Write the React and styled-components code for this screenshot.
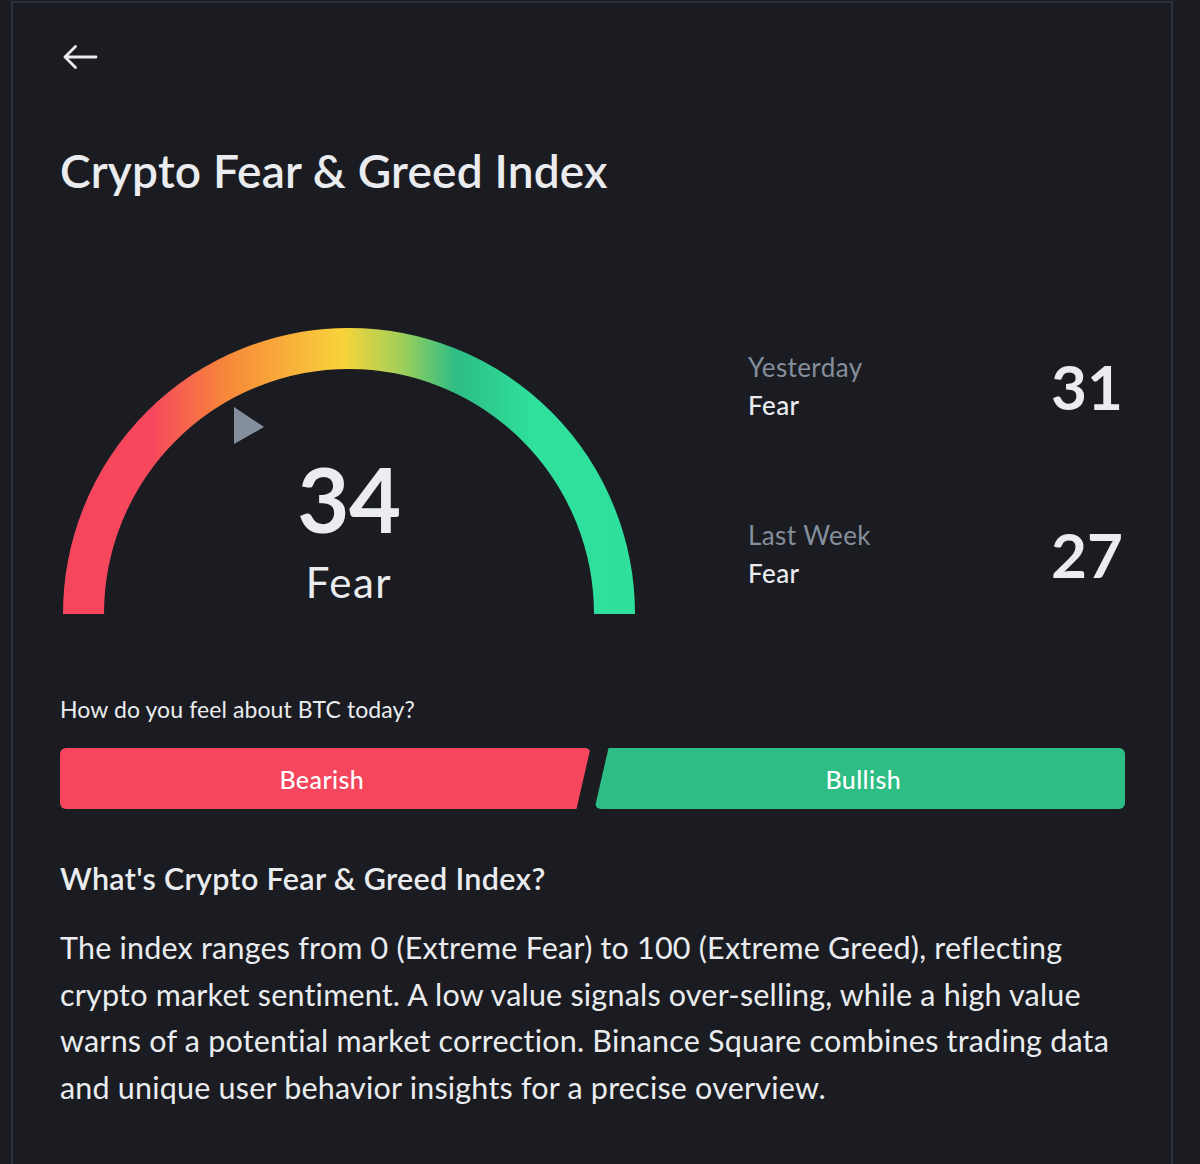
import React from "react";
import styled, { createGlobalStyle } from "styled-components";

const GlobalStyle = createGlobalStyle`
  html, body {
    margin: 0;
    padding: 0;
    background: #1b1c21;
  }
  body {
    font-family: Lato, "Open Sans", sans-serif;
    color: #eaecef;
  }
`;

const history = [
  { label: "Yesterday", mood: "Fear", value: 31 },
  { label: "Last Week", mood: "Fear", value: 27 },
];

function BackArrow() {
  return (
    <svg width="36" height="26" viewBox="0 0 36 26" fill="none">
      <path
        d="M34 13H3M13.5 2.5L3 13l10.5 10.5"
        stroke="#eaecef"
        strokeWidth="2.8"
        strokeLinecap="round"
        strokeLinejoin="round"
      />
    </svg>
  );
}

function GaugeArc() {
  return (
    <svg width="572" height="287" viewBox="0 0 572 287">
      <defs>
        <linearGradient id="fg" x1="0" y1="0" x2="1" y2="0">
          <stop offset="0" stopColor="#f6465d" />
          <stop offset="0.13" stopColor="#f6485c" />
          <stop offset="0.27" stopColor="#f7883a" />
          <stop offset="0.49" stopColor="#f8d33a" />
          <stop offset="0.6" stopColor="#9fcf5a" />
          <stop offset="0.7" stopColor="#2ebd85" />
          <stop offset="0.85" stopColor="#2fe19c" />
          <stop offset="1" stopColor="#2fe09c" />
        </linearGradient>
      </defs>
      <path
        d="M20.5 287 A265.5 265.5 0 0 1 551.5 287"
        stroke="url(#fg)"
        strokeWidth="41"
        fill="none"
      />
      <polygon points="171,80 201,100 171,117" fill="#848e9c" />
    </svg>
  );
}

function App() {
  return (
    <>
      <GlobalStyle />
      <Frame>
        <BackButton>
          <BackArrow />
        </BackButton>
        <Title>Crypto Fear &amp; Greed Index</Title>

        <Overview>
          <Gauge>
            <GaugeArc />
            <GaugeReading>
              <Score>34</Score>
              <Mood>Fear</Mood>
            </GaugeReading>
          </Gauge>

          <History>
            {history.map((h) => (
              <HistoryRow key={h.label}>
                <div>
                  <HistoryLabel>{h.label}</HistoryLabel>
                  <HistoryMood>{h.mood}</HistoryMood>
                </div>
                <HistoryValue>{h.value}</HistoryValue>
              </HistoryRow>
            ))}
          </History>
        </Overview>

        <Question>How do you feel about BTC today?</Question>
        <VoteRow>
          <VoteButton $side="left">Bearish</VoteButton>
          <VoteButton $side="right">Bullish</VoteButton>
        </VoteRow>

        <SectionTitle>What's Crypto Fear &amp; Greed Index?</SectionTitle>
        <Body>
          The index ranges from 0 (Extreme Fear) to 100 (Extreme Greed),
          reflecting crypto market sentiment. A low value signals
          over-selling, while a high value warns of a potential market
          correction. Binance Square combines trading data and unique user
          behavior insights for a precise overview.
        </Body>
      </Frame>
    </>
  );
}

const Frame = styled.main`
  box-sizing: border-box;
  margin: 1px 0 0 11px;
  width: 1162px;
  min-height: 1163px;
  border: 2px solid #2c303c;
  border-bottom: none;
  padding: 39px 47px 40px 47px;
  background: #1b1c21;
`;

const BackButton = styled.button`
  display: block;
  padding: 0;
  margin: 2px 0 0 2px;
  border: none;
  background: none;
  cursor: pointer;
  line-height: 0;
`;

const Title = styled.h1`
  margin: 74px 0 0;
  font-size: 46px;
  line-height: 54px;
  font-weight: 600;
  color: #eaecef;
  letter-spacing: 0.2px;
`;

const Overview = styled.section`
  display: flex;
  align-items: flex-start;
  margin-top: 129px;
`;

const Gauge = styled.div`
  display: grid;
  margin-left: 3px;
  width: 572px;
  & > * {
    grid-area: 1 / 1;
  }
`;

const GaugeReading = styled.div`
  display: flex;
  flex-direction: column;
  align-items: center;
  padding-top: 126px;
`;

const Score = styled.div`
  font-size: 90px;
  line-height: 90px;
  font-weight: 700;
  color: #eaecef;
  letter-spacing: -0.5px;
`;

const Mood = styled.div`
  margin-top: 15px;
  font-size: 42px;
  line-height: 48px;
  font-weight: 400;
  letter-spacing: 1.5px;
  color: #eaecef;
`;

const History = styled.div`
  display: flex;
  flex-direction: column;
  gap: 94px;
  margin: 22px 0 0 113px;
  width: 375px;
`;

const HistoryRow = styled.div`
  display: flex;
  justify-content: space-between;
  align-items: center;
`;

const HistoryLabel = styled.div`
  font-size: 26px;
  line-height: 36px;
  letter-spacing: 0.4px;
  color: #848e9c;
`;

const HistoryMood = styled.div`
  margin-top: 2px;
  font-size: 26px;
  line-height: 36px;
  font-weight: 500;
  letter-spacing: 0.4px;
  color: #eaecef;
`;

const HistoryValue = styled.div`
  font-size: 62px;
  line-height: 72px;
  font-weight: 700;
  color: #eaecef;
`;

const Question = styled.p`
  margin: 81px 0 0;
  font-size: 23px;
  line-height: 28px;
  letter-spacing: 0.1px;
  color: #eaecef;
`;

const VoteRow = styled.div`
  display: flex;
  gap: 4px;
  margin-top: 25px;
  width: 1065px;
`;

const VoteButton = styled.button`
  flex: 1;
  height: 61px;
  border: none;
  border-radius: 6px;
  font-family: inherit;
  font-size: 25px;
  font-weight: 500;
  letter-spacing: 0.4px;
  color: #ffffff;
  cursor: pointer;
  background: ${(p) => (p.$side === "left" ? "#f6465d" : "#2ebd85")};
  clip-path: ${(p) =>
    p.$side === "left"
      ? "polygon(0 0, 100% 0, calc(100% - 14px) 100%, 0 100%)"
      : "polygon(14px 0, 100% 0, 100% 100%, 0 100%)"};
  padding: ${(p) => (p.$side === "left" ? "0 7px 0 0" : "0 0 0 7px")};
`;

const SectionTitle = styled.h2`
  margin: 51px 0 0;
  font-size: 30.5px;
  line-height: 36px;
  font-weight: 600;
  letter-spacing: 0.3px;
  color: #eaecef;
`;

const Body = styled.p`
  margin: 28px 0 0;
  width: 1070px;
  font-size: 30.5px;
  line-height: 46.5px;
  letter-spacing: 0.2px;
  color: #eaecef;
`;

export default App;
